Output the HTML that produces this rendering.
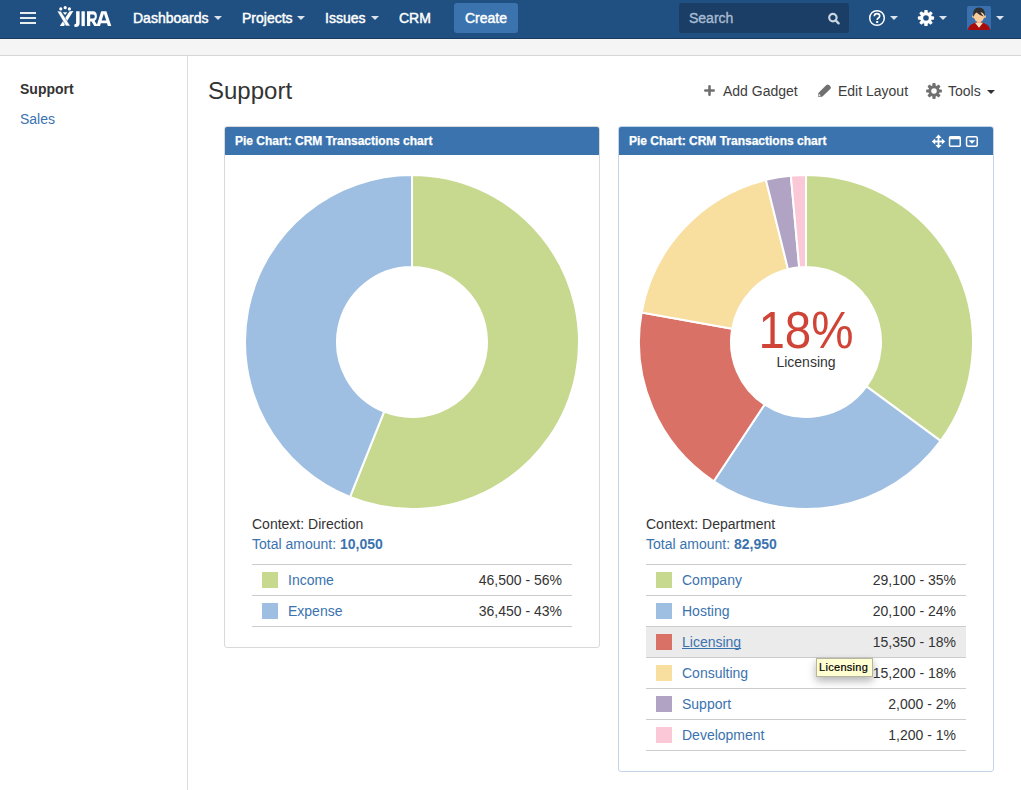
<!DOCTYPE html>
<html><head><meta charset="utf-8">
<style>
*{margin:0;padding:0;box-sizing:border-box}
html,body{width:1021px;height:790px;overflow:hidden;background:#fff;font-family:"Liberation Sans",sans-serif;color:#333}
.a{position:absolute;white-space:nowrap}
#hdr{position:absolute;left:0;top:0;width:1021px;height:39px;background:#205081;border-bottom:1px solid #173a5e}
.nav{position:absolute;top:-1px;height:38px;line-height:38px;font-size:14px;color:#fff;-webkit-text-stroke:0.45px #fff}
.car{position:absolute;width:0;height:0;border-left:4px solid transparent;border-right:4px solid transparent;border-top:4px solid #dce3eb}
#strip{position:absolute;left:0;top:39px;width:1021px;height:17px;background:#f5f5f5;border-bottom:1px solid #d6d6d6}
#side{position:absolute;left:187px;top:56px;width:1px;height:734px;background:#dcdcdc}
.gad{position:absolute;border:1px solid #d9d9d9;border-radius:3px;background:#fff}
.gh{position:absolute;left:0;top:0;right:0;height:28px;background:#3b73af;border-radius:2px 2px 0 0;color:#fff;font-weight:bold;font-size:12px;line-height:29px;padding-left:10px;-webkit-text-stroke:0.25px #fff}
.tbl{position:absolute;width:320px}
.row{position:relative;height:31px;border-top:1px solid #ccc}
.row:last-child{border-bottom:1px solid #ccc;height:32px}
.sw{position:absolute;left:10px;top:7px;width:16px;height:16px}
.lab{position:absolute;left:36px;top:0;line-height:30px;font-size:14px;color:#3b73af}
.val{position:absolute;right:10px;top:0;line-height:30px;font-size:14px;color:#333}
</style></head><body>
<div id="hdr">
  <!-- hamburger -->
  <div class="a" style="left:20px;top:12px;width:16px;height:2px;background:#e8edf2"></div>
  <div class="a" style="left:20px;top:17px;width:16px;height:2px;background:#e8edf2"></div>
  <div class="a" style="left:20px;top:22px;width:16px;height:2px;background:#e8edf2"></div>
  <!-- logo -->
  <svg class="a" style="left:52px;top:3px" width="64" height="28" viewBox="52 3 64 28">
    <g fill="#fff">
      <circle cx="60.8" cy="8.9" r="1.6"/><circle cx="65.2" cy="7.7" r="1.6"/><circle cx="69.4" cy="8.9" r="1.6"/>
      <polygon points="69.6,11.3 73.4,11.0 64.0,25.9 59.8,25.9"/>
      <polygon points="57.1,11.0 60.9,11.3 70.3,25.9 65.9,25.9" stroke="#205081" stroke-width="0.5"/>
      <polygon points="62.8,12.2 67.4,12.2 65.1,14.9"/>
      <path d="M76.1 11.3H79.6V23.2Q79.6 26.9 75.6 26.9Q74.8 26.9 74.2 26.6L74.6 23.9Q75 24.1 75.4 24.1Q76.1 24.1 76.1 23Z"/>
      <rect x="81.5" y="11.3" width="3.3" height="14.8"/>
      <path fill-rule="evenodd" d="M87 11.3H93Q96.9 11.3 96.9 16.4Q96.9 19.6 94.6 20.9L97.9 26.1H94.3L91.6 21.5H90.2V26.1H87Z M90.2 14.4V18.5H93Q94.8 18.5 94.8 16.45Q94.8 14.4 93 14.4Z"/>
      <path fill-rule="evenodd" d="M101.2 11.3H106.4L111.3 26.1H107.8L107 23.2H100.8L100 26.1H96.5Z M101.6 20.4H106.2L103.9 13.6Z"/>
    </g>
  </svg>
  <div class="nav" style="left:133px">Dashboards</div><div class="car" style="left:214px;top:16px"></div>
  <div class="nav" style="left:242px">Projects</div><div class="car" style="left:297px;top:16px"></div>
  <div class="nav" style="left:325px">Issues</div><div class="car" style="left:371px;top:16px"></div>
  <div class="nav" style="left:399px">CRM</div>
  <div class="a" style="left:454px;top:3px;width:64px;height:30px;background:#3b73af;border-radius:3px"></div>
  <div class="nav" style="left:465px">Create</div>
  <!-- search -->
  <div class="a" style="left:679px;top:3px;width:170px;height:30px;background:#1b3e66;border-radius:3px"></div>
  <div class="nav" style="left:689px;color:#a9bcd1;-webkit-text-stroke:0.35px #a9bcd1">Search</div>
  <svg class="a" style="left:826px;top:11px" width="16" height="15" viewBox="0 0 16 15">
    <circle cx="6.9" cy="6.6" r="3.7" fill="none" stroke="#c9d5e1" stroke-width="2.2"/>
    <line x1="9.6" y1="9.3" x2="12.6" y2="12.3" stroke="#c9d5e1" stroke-width="2.4" stroke-linecap="round"/>
  </svg>
  <!-- help -->
  <svg class="a" style="left:868px;top:9px" width="18" height="18" viewBox="0 0 18 18">
    <circle cx="9" cy="9" r="7.3" fill="none" stroke="#fff" stroke-width="1.5"/>
    <path d="M6.3 7.2 Q6.3 4.6 9 4.6 Q11.7 4.6 11.7 7 Q11.7 8.4 10.1 9.3 Q9.2 9.8 9.2 11" fill="none" stroke="#fff" stroke-width="1.6"/>
    <rect x="8.2" y="12" width="2" height="2" fill="#fff"/>
  </svg>
  <div class="car" style="left:890px;top:16px"></div>
  <!-- gear -->
  <svg class="a" style="left:917px;top:9px" width="18" height="18" viewBox="-9 -9 18 18">
    <g fill="#fff">
      <path d="M-1.7 -4 V-7.2 Q-1.7 -8.1 -0.8 -8.1 H0.8 Q1.7 -8.1 1.7 -7.2 V-4Z"/>
      <path d="M-1.7 -4 V-7.2 Q-1.7 -8.1 -0.8 -8.1 H0.8 Q1.7 -8.1 1.7 -7.2 V-4Z" transform="rotate(45)"/><path d="M-1.7 -4 V-7.2 Q-1.7 -8.1 -0.8 -8.1 H0.8 Q1.7 -8.1 1.7 -7.2 V-4Z" transform="rotate(90)"/><path d="M-1.7 -4 V-7.2 Q-1.7 -8.1 -0.8 -8.1 H0.8 Q1.7 -8.1 1.7 -7.2 V-4Z" transform="rotate(135)"/>
      <path d="M-1.7 -4 V-7.2 Q-1.7 -8.1 -0.8 -8.1 H0.8 Q1.7 -8.1 1.7 -7.2 V-4Z" transform="rotate(180)"/><path d="M-1.7 -4 V-7.2 Q-1.7 -8.1 -0.8 -8.1 H0.8 Q1.7 -8.1 1.7 -7.2 V-4Z" transform="rotate(225)"/><path d="M-1.7 -4 V-7.2 Q-1.7 -8.1 -0.8 -8.1 H0.8 Q1.7 -8.1 1.7 -7.2 V-4Z" transform="rotate(270)"/><path d="M-1.7 -4 V-7.2 Q-1.7 -8.1 -0.8 -8.1 H0.8 Q1.7 -8.1 1.7 -7.2 V-4Z" transform="rotate(315)"/>
    </g>
    <circle cx="0" cy="0" r="4.35" fill="none" stroke="#fff" stroke-width="3.1"/>
  </svg>
  <div class="car" style="left:939px;top:16px"></div>
  <!-- avatar -->
  <svg class="a" style="left:967px;top:6px" width="24" height="24" viewBox="0 0 24 24">
    <rect width="24" height="24" rx="2" fill="#3a70ad"/>
    <path d="M1 24 Q1.2 19.6 5.3 17.9 L9 16.2 L15 16.2 L18.7 17.9 Q22.8 19.6 23 24Z" fill="#a80c0c"/>
    <path d="M8 16.8 L12 21.8 L16 16.8Z" fill="#fbe1bd"/>
    <rect x="9.8" y="12" width="4.4" height="5.2" fill="#eeb987"/>
    <circle cx="6.3" cy="10.6" r="1.3" fill="#f4c391"/><circle cx="17.7" cy="10.6" r="1.3" fill="#f4c391"/>
    <ellipse cx="12" cy="10" rx="5.3" ry="5.9" fill="#f8cc9c"/>
    <path d="M6.1 10.2 Q5.4 1.6 12 1.6 Q18.6 1.6 17.9 10.2 L17.2 9 Q16.6 6.6 13.4 6 Q14.8 8.6 16.6 10.6 Q12.2 9.2 9.6 6.6 Q7.4 7.6 6.8 10.4Z" fill="#2f2f2f"/>
  </svg>
  <div class="car" style="left:996px;top:16px"></div>
</div>
<div id="strip"></div>
<div id="side"></div>

<div class="a" style="left:20px;top:79px;font-size:14px;font-weight:bold;line-height:20px;color:#333">Support</div>
<div class="a" style="left:20px;top:109px;font-size:14px;line-height:20px;color:#3b73af">Sales</div>

<div class="a" style="left:208px;top:75px;font-size:24px;line-height:32px;color:#333">Support</div>

<!-- toolbar -->
<svg class="a" style="left:704px;top:85px" width="11" height="11" viewBox="0 0 11 11"><path d="M5.5 1.3V9.7M1.3 5.5H9.7" stroke="#707070" stroke-width="2.6" stroke-linecap="round"/></svg>
<div class="a" style="left:723px;top:81px;font-size:14px;line-height:20px;color:#3d3d3d">Add Gadget</div>
<svg class="a" style="left:817px;top:84px" width="15" height="13" viewBox="0 0 15 13"><path d="M1 12.7 L1.4 9 L9.4 1 Q10.7 -0.2 12 1 L13.3 2.3 Q14.5 3.6 13.3 4.9 L5.2 12.8Z" fill="#707070"/><path d="M1.5 12 L2 10 L3.8 11.6Z" fill="#fff"/></svg>
<div class="a" style="left:838px;top:81px;font-size:14px;line-height:20px;color:#3d3d3d">Edit Layout</div>
<svg class="a" style="left:926px;top:82.6px" width="16" height="16" viewBox="-8 -8 16 16">
  <g fill="#707070">
    <path d="M-1.6 -4 V-7 Q-1.6 -7.9 -0.7 -7.9 H0.7 Q1.6 -7.9 1.6 -7 V-4Z"/>
    <path d="M-1.6 -4 V-7 Q-1.6 -7.9 -0.7 -7.9 H0.7 Q1.6 -7.9 1.6 -7 V-4Z" transform="rotate(45)"/><path d="M-1.6 -4 V-7 Q-1.6 -7.9 -0.7 -7.9 H0.7 Q1.6 -7.9 1.6 -7 V-4Z" transform="rotate(90)"/><path d="M-1.6 -4 V-7 Q-1.6 -7.9 -0.7 -7.9 H0.7 Q1.6 -7.9 1.6 -7 V-4Z" transform="rotate(135)"/>
    <path d="M-1.6 -4 V-7 Q-1.6 -7.9 -0.7 -7.9 H0.7 Q1.6 -7.9 1.6 -7 V-4Z" transform="rotate(180)"/><path d="M-1.6 -4 V-7 Q-1.6 -7.9 -0.7 -7.9 H0.7 Q1.6 -7.9 1.6 -7 V-4Z" transform="rotate(225)"/><path d="M-1.6 -4 V-7 Q-1.6 -7.9 -0.7 -7.9 H0.7 Q1.6 -7.9 1.6 -7 V-4Z" transform="rotate(270)"/><path d="M-1.6 -4 V-7 Q-1.6 -7.9 -0.7 -7.9 H0.7 Q1.6 -7.9 1.6 -7 V-4Z" transform="rotate(315)"/>
  </g>
  <circle cx="0" cy="0" r="4.2" fill="none" stroke="#707070" stroke-width="2.9"/>
</svg>
<div class="a" style="left:948px;top:81px;font-size:14px;line-height:20px;color:#3d3d3d">Tools</div>
<div class="a" style="left:987px;top:90px;width:0;height:0;border-left:4px solid transparent;border-right:4px solid transparent;border-top:4px solid #333"></div>

<!-- left gadget -->
<div class="gad" style="left:224px;top:126px;width:376px;height:522px">
  <div class="gh">Pie Chart: CRM Transactions chart</div>
</div>
<!-- right gadget -->
<div class="gad" style="left:618px;top:126px;width:376px;height:646px;border-color:#c5d5e8">
  <div class="gh">Pie Chart: CRM Transactions chart</div>
  <svg class="a" style="left:312px;top:7px" width="48" height="14" viewBox="931 134 48 14">
    <g fill="#fff">
      <rect x="937.6" y="137" width="1.8" height="9"/><rect x="934" y="140.6" width="9" height="1.8"/>
      <polygon points="938.5,134.6 935.4,138 941.6,138"/><polygon points="938.5,148.4 935.4,145 941.6,145"/>
      <polygon points="931.8,141.5 935.2,138.4 935.2,144.6"/><polygon points="945.2,141.5 941.8,138.4 941.8,144.6"/>
    </g>
    <path d="M950.5 136H959.3Q961 136 961 137.7V145.3Q961 147 959.3 147H950.5Q948.8 147 948.8 145.3V137.7Q948.8 136 950.5 136ZM950.3 139.3V145.5H959.5V139.3Z" fill="#fff" fill-rule="evenodd"/>
    <rect x="966.55" y="136.75" width="10.7" height="9.5" rx="1.5" fill="none" stroke="#fff" stroke-width="1.5"/>
    <polygon points="968.6,140.2 975.4,140.2 972,143.8" fill="#fff"/>
  </svg>
</div>

<div id="pies"><svg class="a" style="left:0;top:0" width="1021" height="790" viewBox="0 0 1021 790"><g stroke="#fff" stroke-width="2" stroke-linejoin="round">
<path d="M412.00 175.00A167 167 0 1 1 349.96 497.05L384.14 411.63A75 75 0 1 0 412.00 267.00Z" fill="#c7d88f"/>
<path d="M349.96 497.05A167 167 0 0 1 412.00 175.00L412.00 267.00A75 75 0 0 0 384.14 411.63Z" fill="#9ebfe1"/>
<path d="M806.00 175.00A167 167 0 0 1 940.60 440.85L866.45 386.39A75 75 0 0 0 806.00 267.00Z" fill="#c7d88f"/>
<path d="M940.60 440.85A167 167 0 0 1 713.76 481.22L764.58 404.52A75 75 0 0 0 866.45 386.39Z" fill="#9ebfe1"/>
<path d="M713.76 481.22A167 167 0 0 1 641.61 312.59L732.17 328.79A75 75 0 0 0 764.58 404.52Z" fill="#da7167"/>
<path d="M641.61 312.59A167 167 0 0 1 765.92 179.88L788.00 269.19A75 75 0 0 0 732.17 328.79Z" fill="#f8dfa0"/>
<path d="M765.92 179.88A167 167 0 0 1 790.84 175.69L799.19 267.31A75 75 0 0 0 788.00 269.19Z" fill="#b0a3c4"/>
<path d="M790.84 175.69A167 167 0 0 1 806.00 175.00L806.00 267.00A75 75 0 0 0 799.19 267.31Z" fill="#fac8d7"/>
</g></svg></div>

<div class="a" style="left:252px;top:514px;font-size:14px;line-height:20px;color:#333">Context: Direction</div>
<div class="a" style="left:252px;top:534px;font-size:14px;line-height:20px;color:#3b73af">Total amount: <b>10,050</b></div>
<div class="tbl" style="left:252px;top:564px">
  <div class="row"><div class="sw" style="background:#c7d88f"></div><div class="lab">Income</div><div class="val">46,500 - 56%</div></div>
  <div class="row"><div class="sw" style="background:#9ebfe1"></div><div class="lab">Expense</div><div class="val">36,450 - 43%</div></div>
</div>

<div class="a" style="left:646px;top:514px;font-size:14px;line-height:20px;color:#333">Context: Department</div>
<div class="a" style="left:646px;top:534px;font-size:14px;line-height:20px;color:#3b73af">Total amount: <b>82,950</b></div>
<div class="tbl" style="left:646px;top:564px">
  <div class="row"><div class="sw" style="background:#c7d88f"></div><div class="lab">Company</div><div class="val">29,100 - 35%</div></div>
  <div class="row"><div class="sw" style="background:#9ebfe1"></div><div class="lab">Hosting</div><div class="val">20,100 - 24%</div></div>
  <div class="row" style="background:#ebebeb"><div class="sw" style="background:#da7167"></div><div class="lab" style="text-decoration:underline;text-decoration-skip-ink:none">Licensing</div><div class="val">15,350 - 18%</div></div>
  <div class="row"><div class="sw" style="background:#f8dfa0"></div><div class="lab">Consulting</div><div class="val">15,200 - 18%</div></div>
  <div class="row"><div class="sw" style="background:#b0a3c4"></div><div class="lab">Support</div><div class="val">2,000 - 2%</div></div>
  <div class="row"><div class="sw" style="background:#fac8d7"></div><div class="lab">Development</div><div class="val">1,200 - 1%</div></div>
</div>


<div class="a" style="left:736px;top:300px;width:140px;text-align:center;font-size:52px;line-height:60px;color:#d04437;transform:scaleX(0.915)">18%</div>
<div class="a" style="left:756px;top:352px;width:100px;text-align:center;font-size:14px;line-height:20px;color:#333">Licensing</div>
<div class="a" style="left:816px;top:658px;width:57px;height:19px;background:#ffffd2;border:1px solid #b5b5a0;box-shadow:0 4px 8px rgba(0,0,0,0.3)"></div>
<div class="a" style="left:819px;top:658px;font-size:11px;line-height:19px;letter-spacing:0.3px;color:#000;-webkit-text-stroke:0.2px #000">Licensing</div>
</body></html>
